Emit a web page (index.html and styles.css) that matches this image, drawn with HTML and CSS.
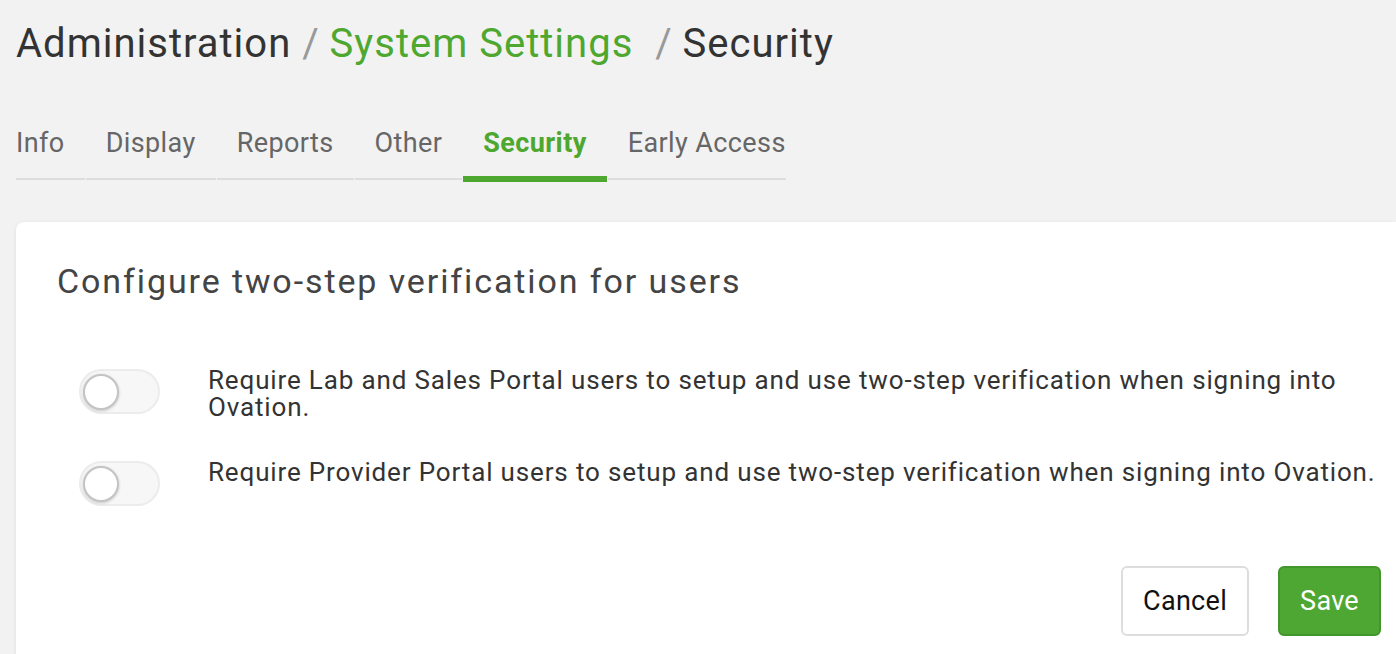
FILE: index.html
```html
<!DOCTYPE html>
<html lang="en">
<head>
    <meta charset="UTF-8">
    <title>Security</title>
    <link rel="stylesheet" href="styles.css">
</head>
<body>

<div class="page">
    <div class="breadcrumb">
        <span>Administration</span>
        <span class="crumb-sep">/</span>
        <a class="crumb-link" href="#">System Settings</a>&nbsp;
        <span class="crumb-sep">/</span>
        <span>Security</span>
    </div>

    <div class="tabs">
        <div class="tab">Info</div>
        <div class="tab">Display</div>
        <div class="tab">Reports</div>
        <div class="tab">Other</div>
        <div class="tab active">Security</div>
        <div class="tab">Early Access</div>
    </div>

    <div class="card">
        <h2 class="card-title">Configure two-step verification for users</h2>

        <div class="setting-row">
            <div class="toggle"><div class="toggle-knob"></div></div>
            <div class="setting-label">Require Lab and Sales Portal users to setup and use two-step verification when signing into Ovation.</div>
        </div>
        <div class="setting-row">
            <div class="toggle"><div class="toggle-knob"></div></div>
            <div class="setting-label">Require Provider Portal users to setup and use two-step verification when signing into Ovation.</div>
        </div>

        <div class="card-actions">
            <button class="btn btn-cancel">Cancel</button>
            <button class="btn btn-save">Save</button>
        </div>
    </div>
</div>

</body>
</html>
```

FILE: styles.css
```css
body {
    margin: 0;
    background: #f2f2f2;
    font-family: Roboto, "Liberation Sans", sans-serif;
    overflow: hidden;
}

.page {
    padding: 20px 0 0 16px;
}

.breadcrumb {
    font-size: 40px;
    line-height: 48px;
    letter-spacing: 1px;
    color: #333;
}

.crumb-sep {
    color: #999;
    letter-spacing: 0;
}

.crumb-link {
    color: #4ea72e;
    text-decoration: none;
}

.tabs {
    display: flex;
    align-items: flex-start;
    gap: 1px;
    margin-top: 59px;
}

.tab {
    font-size: 27px;
    line-height: 32px;
    letter-spacing: 0.4px;
    color: #666;
    padding: 0 20px 19px;
    border-bottom: 2px solid #ddd;
}

.tab:first-child {
    padding-left: 0;
}

.tab:last-child {
    padding-right: 0;
}

.tab.active {
    color: #4ea72e;
    font-weight: bold;
    padding-bottom: 17px;
    border-bottom: 6px solid #4ea72e;
}

.card {
    margin-top: 40px;
    background: #fff;
    border-radius: 8px 0 0 0;
    box-shadow: 0 1px 4px rgba(0, 0, 0, 0.08);
    padding: 39px 15px 40px 41px;
}

.card-title {
    margin: 0;
    font-size: 34px;
    line-height: 40px;
    font-weight: normal;
    color: #444;
    letter-spacing: 1.9px;
}

.setting-row {
    display: flex;
    align-items: flex-start;
    gap: 48px;
    padding-left: 22px;
    margin-top: 38px;
}

.card-title + .setting-row {
    margin-top: 66px;
}

.toggle {
    flex: none;
    width: 81px;
    height: 45px;
    margin-top: 2px;
    box-sizing: border-box;
    border: 2px solid #ececec;
    border-radius: 23px;
    background: #f7f7f7;
    display: flex;
    align-items: center;
    padding-left: 2px;
}

.toggle-knob {
    width: 36px;
    height: 36px;
    box-sizing: border-box;
    border-radius: 50%;
    background: #fff;
    border: 2px solid #c4c4c4;
    box-shadow: 0 1px 3px rgba(0, 0, 0, 0.2);
}

.setting-label {
    flex: 1;
    min-width: 0;
    font-size: 26px;
    line-height: 27px;
    letter-spacing: 0.85px;
    color: #333;
}

.card-actions {
    display: flex;
    justify-content: flex-end;
    gap: 29px;
    margin-top: 60px;
}

.btn {
    height: 70px;
    padding: 0 20px;
    font-family: inherit;
    font-size: 27px;
    letter-spacing: 0.3px;
    border-radius: 6px;
    border: 2px solid #ddd;
    background: #fff;
    color: #111;
}

.btn-save {
    background: #4ea733;
    border-color: #43962c;
    color: #fff;
}
```
